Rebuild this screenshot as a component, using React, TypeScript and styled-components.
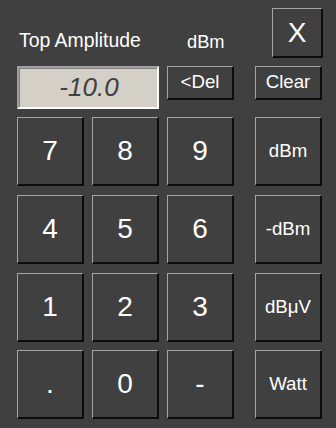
import React from 'react';
import styled, { createGlobalStyle } from 'styled-components';

const GlobalStyle = createGlobalStyle`
    html, body {
        margin: 0;
        padding: 0;
        background-color: #404040;
    }
`;

const Page = styled('div')`
    width: 336px;
    height: 428px;
    box-sizing: border-box;
    padding: 8px 0 0 17px;
    background-color: #404040;
    font-family: "Liberation Sans", Arial, sans-serif;
    color: #fff;

    display: grid;
    grid-template-columns: 67px 67px 67px 80px;
    grid-template-rows: 49px 43px repeat(4, 69px);
    column-gap: 8px;
    row-gap: 8.7px;
`;

const Label = styled('div')<{ $span?: number; $size?: number; $bottom?: number }>`
    grid-column: span ${({ $span }) => $span || 1};
    align-self: end;
    font-size: ${({ $size }) => $size || 18.67}px;
    line-height: 19px;
    margin-bottom: ${({ $bottom }) => $bottom ?? 6}px;
    padding-left: 2px;
    white-space: nowrap;
`;

const UnitLabel = styled(Label)`
    padding-left: 20px;
`;

const Button = styled('button')<{ $size?: number; $w?: number; $h?: number }>`
    box-sizing: border-box;
    width: ${({ $w }) => ($w ? `${$w}px` : '100%')};
    height: ${({ $h }) => ($h ? `${$h}px` : '100%')};
    margin: 0;
    padding: 0;
    background-color: #404040;
    color: #fff;
    font-family: "Liberation Sans", Arial, sans-serif;
    font-size: ${({ $size }) => $size || 28}px;
    border-style: solid;
    border-width: 1px 2px 2px 1px;
    border-color: #a4a4a4 #0c0c0c #0c0c0c #a4a4a4;
    border-radius: 0;
    display: flex;
    align-items: center;
    justify-content: center;
`;

const EntryButton = styled(Button)<{ $end?: boolean }>`
    align-self: start;
    justify-self: ${({ $end }) => ($end ? 'end' : 'start')};
`;

const SideButton = styled(Button)`
    justify-self: end;
`;

const CloseButton = styled(Button)`
    justify-self: end;
    margin-right: -1px;
`;

const Display = styled('div')`
    grid-column: span 2;
    box-sizing: border-box;
    height: 43px;
    width: 142px;
    background-color: #d4d0c8;
    border-style: solid;
    border-width: 2px;
    border-color: #a0a0a0 #ffffff #ffffff #a0a0a0;
    box-shadow: inset 1px 1px 0 #808080;
    color: #404040;
    font-size: 26px;
    font-style: italic;
    display: flex;
    align-items: center;
    justify-content: center;
    padding-left: 2px;
`;

const keys = [
    ['7', '8', '9', 'dBm'],
    ['4', '5', '6', '-dBm'],
    ['1', '2', '3', 'dBμV'],
    ['.', '0', '-', 'Watt'],
];

export default function App() {
    return (
        <>
            <GlobalStyle />
            <Page>
                <Label $span={2} $size={19.4} $bottom={7}>Top Amplitude</Label>
                <UnitLabel $size={18.3}>dBm</UnitLabel>
                <CloseButton $w={51} $h={50}>X</CloseButton>

                <Display>-10.0</Display>
                <EntryButton $size={18.67} $w={67} $h={34}>&lt;Del</EntryButton>
                <EntryButton $end $size={18.67} $w={67} $h={34}>Clear</EntryButton>

                {keys.map((row) =>
                    row.map((k, i) =>
                        i === 3 ? (
                            <SideButton key={k} $size={18.67} $w={67}>{k}</SideButton>
                        ) : (
                            <Button key={k} $size={28}>{k}</Button>
                        )
                    )
                )}
            </Page>
        </>
    );
}
